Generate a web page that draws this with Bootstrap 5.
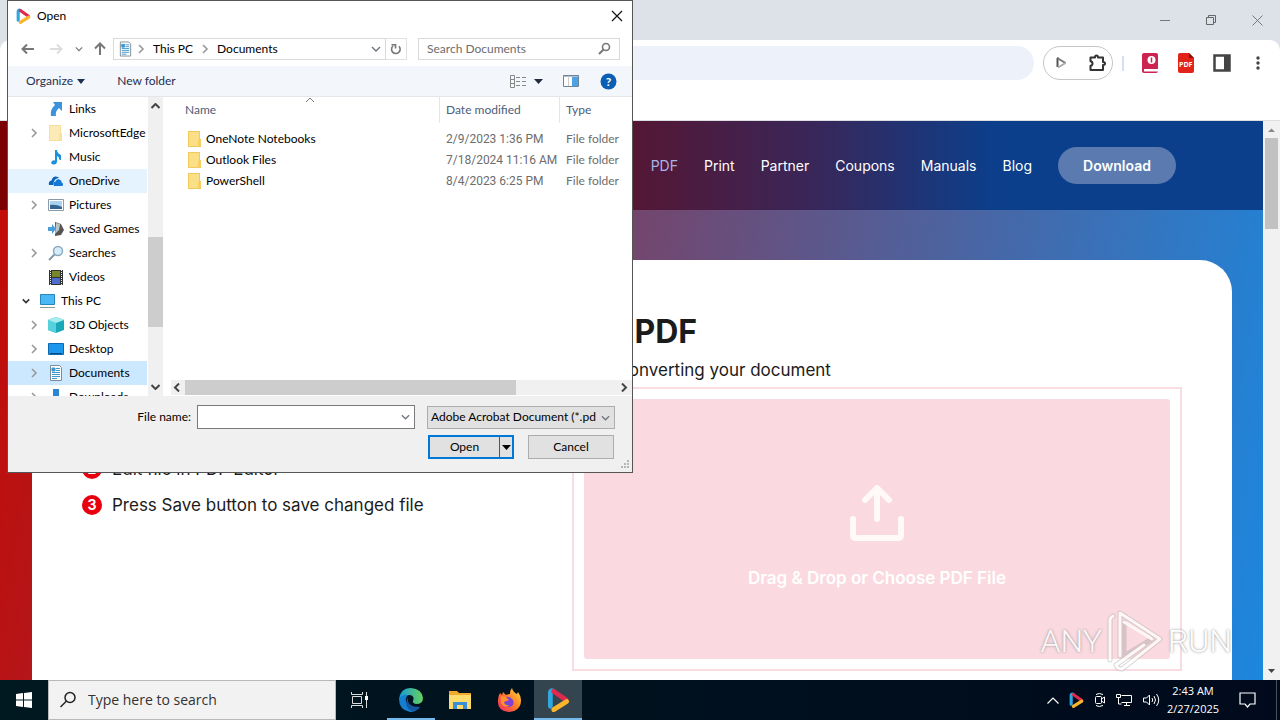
<!DOCTYPE html>
<html lang="en">
<head>
<meta charset="utf-8">
<meta name="viewport" content="width=device-width, initial-scale=1">
<title>Edit PDF</title>
<link rel="stylesheet" href="https://cdn.jsdelivr.net/npm/bootstrap@5.3.0/dist/css/bootstrap.min.css">
<style>
body{font-family:"Open Sans","Noto Sans",sans-serif;font-size:12px;line-height:16px;color:#000;background:#fff}
button,input,select{font:inherit;color:inherit}
svg{display:block;flex:none}
a{text-decoration:none;color:inherit}
.plain{border:0;background:none;padding:0}
.desk{height:100vh;min-height:600px}

/* browser */
.caption-bar{height:40px;background:#dde1e8}
.caption-bar button{width:46px}
.chrome-bg{background:#dde1e8}
.toolbar{height:81px;background:#fff;border-bottom:1px solid #dcdee2;border-radius:10px 10px 0 0;padding:6px 4px 0 90px}
.omnibox{height:34px;background:#ecf1fa;border:0;border-radius:17px;outline:0}
.ext-pill{width:70px;height:34px;margin:0 9px;border:1px solid #c6c6c8;border-radius:17px}
.sep{width:2px;height:15px;background:#d5def3}
.tool{width:36px;height:34px}
.site{font-family:Inter,"Liberation Sans",sans-serif;color:#1b1b1b;background:linear-gradient(100deg,#c40a05,#1c87de)}
.site-nav{height:89px;padding-right:87px;gap:26px;font-size:14px;color:#fff;background:linear-gradient(90deg,#7b0000 30%,#3a2658 64%,#0b3f8c 79%)}
.site-nav .here{color:#a9b4e6}
.cta{height:37px;width:118px;border-radius:19px;background:#5b7bb0;color:#fff;font-weight:600}
.sheet{margin:50px 31px 0 32px;padding:52px 50px 0;border-radius:32px 32px 0 0;background:#fff}
.sheet h1{font-size:32px;line-height:40px;font-weight:700;margin:0 0 8px}
.sub{font-size:17px;line-height:20px;margin:0 0 7px}
.halves{display:grid;grid-template-columns:490fr 610fr}
.steps{list-style:none;margin:0;padding:28px 0 0;font-size:17px;line-height:20px}
.steps li{height:36px;gap:10px}
.num{width:20px;height:20px;border-radius:50%;background:#e9000f;color:#fff;font-size:14px;font-weight:700}
.zone{border:2px solid #f8dce2;padding:10px;height:284px}
.zone button{background:#fadae0;border-radius:3px;color:#fff;font-size:17px;line-height:20px;font-weight:600;gap:27px;padding-top:14px}
.vscroll{width:17px;background:#f1f1f1}
.vscroll .thumb{width:13px;height:91px;background:#c1c1c1}
.brand-mark{right:48px;bottom:48px;color:#fff;font-family:Roboto,"Liberation Sans",sans-serif;font-weight:300;font-size:32px;line-height:40px;text-shadow:0 0 3px #888,0 0 1px #bbb;opacity:.8;pointer-events:none}

/* dialog */
.dlg{left:7px;top:0;width:626px;height:473px;background:#fff;border:1px solid #555;font-family:Lato,"Open Sans",sans-serif}
.dlg-title{height:30px;padding:0 9px 0 8px;gap:6px}
.addr{height:35px;padding:0 12px 0 9px}
.up{margin:0 7px 0 11px}
.box{height:22px;border:1px solid #d9d9d9}
.search-box{margin-left:11px}
.search-box input{border:0;outline:0;width:179px;padding:0 0 0 8px}
.search-box input::placeholder{color:#6d6d6d;opacity:1}
.cmds{height:31px;background:#f3f6fa;border-bottom:1px solid #e3e7ec;color:#1e3054;padding:0 15px 0 18px}
.panes{height:299px}
.tree{width:139px;list-style:none;margin:0;padding:0}
.tree a{display:flex;align-items:center;height:24px;gap:5px;padding-left:22px;white-space:nowrap;overflow:hidden}
.tree a.top{padding-left:14px}
.tree .tw{width:8px;height:10px;margin-right:5px}
.tree a.top .tw{margin-right:4px}
.hov{background:#e5f3ff}
.sel{background:#cce8ff}
.bar15{width:15px;margin-left:1px;padding:6px 0;background:#f0f0f0}
.bar15 .thumb{height:90px;margin-top:128px;background:#cdcdcd}
.files{table-layout:fixed;width:460px;color:#6d6d6d;border-collapse:separate;border-spacing:0}
.files th{height:26px;font-weight:400;color:#4c607a;padding:0 0 0 6px}
.files th+th{border-left:1px solid #e5e5e5}
.files td{height:21px;padding:0 0 0 7px;white-space:nowrap}
.files th:first-child{padding-left:14px}
.files td:first-child{padding-left:17px}
.files td:nth-child(2){font-family:Roboto,"Open Sans",sans-serif}
.files td span{gap:4px}
.files .sort{left:134px;top:0}
.files tbody:before{content:"";display:block;height:5px}
.hbar{height:15px;margin-bottom:1px;background:#f0f0f0}
.hbar .thumb{width:331px;background:#cdcdcd}
.foot{background:#f0f0f0;height:75px;padding:9px 17px 0 0}
.foot label{width:189px;text-align:right;padding-right:6px}
.fname{width:218px;height:24px;border:1px solid #7a7a7a;background:#fff}
.fname input{border:0;outline:0;width:190px}
.ftype{width:188px;height:23px;border:1px solid #adadad;background:#e1e1e1}
.ftype select{appearance:none;border:0;background:none;width:168px;padding:0 0 0 3px;outline:0}
.ftype svg{right:4px;top:8px}
.acts{gap:14px;padding:2px 1px 0 0}
.w-btn{width:86px;height:24px;border:1px solid #adadad;background:#e1e1e1}
.split{border:2px solid #0078d7;background:#e1e1e1;width:86px;height:24px}
.split .drop{width:13px;border-left:1px solid #555}
.grip{right:2px;bottom:2px}

/* taskbar */
.taskbar{height:40px;background:linear-gradient(90deg,#001820,#000a1c);color:#fff}
.taskbar .tb{width:48px;height:40px}
.find{width:288px;background:#f2f2f2;border:1px solid #b9b9b9;color:#333;padding-left:10px;gap:9px}
.find input{border:0;background:none;outline:0;font-size:14px;width:220px}
.find input::placeholder{color:#333;opacity:1}
.pinned{gap:1px;margin-left:3px}
.run{box-shadow:inset 0 -2px #76b9ed}
.act{background:#35454f}
.tray{gap:10px;padding-right:3px}
.clock{width:60px;text-align:center;font-size:11px;line-height:18px}
.peek{width:4px;margin-left:5px;border-left:1px solid #4a525c}
</style>
</head>
<body>
<svg width="0" height="0" class="position-absolute" aria-hidden="true">
<defs>
<symbol id="r" viewBox="0 0 8 10"><path d="M2 1l4 4-4 4" fill="none" stroke="#999" stroke-width="1.6"/></symbol>
<symbol id="chev" viewBox="0 0 10 6"><path d="M1 1l4 4 4-4" fill="none" stroke="currentColor" stroke-width="1.4"/></symbol>
<symbol id="doc" viewBox="0 0 16 16"><path d="M2.500.5h9l2 2v13h-11z" fill="#fff" stroke="#7b8c98"/><path d="M4 3h3v3H4zM8 3.500h4M8 5.500h4M4 7.500h8M4 9.500h8M4 11.500h8M4 13.500h5" stroke="#3f97cf" fill="#3f97cf"/></symbol>
<symbol id="fold" viewBox="0 0 14 16"><path d="M0 0h12v8h1v8H0z" fill="#f0cb5c"/><path d="M1 1h10v14H1z" fill="#fbdf86"/><path d="M10 9h3v6h-3z" fill="#f5cf62"/></symbol>
<symbol id="play" viewBox="0 0 24 26"><path d="M3.500 19V5q0-3 3-2" fill="none" stroke="#2fa8e0" stroke-width="5" stroke-linecap="round"/><path d="M7 3.500l13 9" fill="none" stroke="#e0294d" stroke-width="5" stroke-linecap="round"/><path d="M20.500 14L7 22.500" fill="none" stroke="#fbb52c" stroke-width="5" stroke-linecap="round"/></symbol>
</defs>
</svg>
<div class="desk d-flex flex-column position-relative overflow-hidden">
<main class="flex-grow-1 d-flex flex-column overflow-hidden position-relative" style="min-height:0">
  <div class="caption-bar d-flex justify-content-end flex-shrink-0">
    <button class="plain d-flex align-items-center justify-content-center" aria-label="Minimize"><svg width="10" height="10"><path d="M0 5.500h10" stroke="#777"/></svg></button>
    <button class="plain d-flex align-items-center justify-content-center" aria-label="Restore"><svg width="10" height="10" fill="none" stroke="#666"><path d="M.5 2.500h7v7h-7zM2.500 2V.5h7v7H8"/></svg></button>
    <button class="plain d-flex align-items-center justify-content-center" aria-label="Close"><svg width="11" height="11"><path d="M.5.5l10 10M10.500.5l-10 10" stroke="#777"/></svg></button>
  </div>
  <div class="chrome-bg flex-shrink-0">
  <div class="toolbar d-flex align-items-start">
    <input class="omnibox flex-grow-1" aria-label="Address">
    <div class="ext-pill d-flex align-items-center justify-content-between ps-2 pe-1">
      <svg class="ms-1" width="11" height="12" fill="none" stroke-width="2"><path d="M1.500 10V2q0-1 1-.5" stroke="#555"/><path d="M2 1.500L9.500 6" stroke="#777"/><path d="M9.500 6L2 10.500" stroke="#aaa"/></svg>
      <svg width="20" height="20" fill="none" stroke="#333" stroke-width="2"><path d="M2.500 4.500h4.500q0-2 1.500-2t1.500 2h5v4.500q2 0 2 1.500t-2 1.500v5h-12.500v-4.200q2-.3 2-2.300t-2-2.300z" stroke-linejoin="round"/></svg>
    </div>
    <div class="d-flex align-items-center">
      <span class="sep me-1"></span>
      <button class="tool plain d-flex align-items-center justify-content-center ms-1" aria-label="Manual"><svg width="17" height="20"><rect width="16" height="20" rx="2" fill="#cc2350"/><path d="M2 16h14v2.500H2z" fill="#fff"/><circle cx="9.500" cy="7" r="4" fill="#fff"/><path d="M9.500 4.500v5" stroke="#cc2350" stroke-width="1.500"/></svg></button>
      <button class="tool plain d-flex align-items-center justify-content-center" aria-label="PDF"><svg width="17" height="20"><path d="M2 0h9l5 5v13q0 2-2 2H2q-2 0-2-2V2q0-2 2-2z" fill="#e2231a"/><path d="M11 0v5h5z" fill="#8c0d0d"/><text x="1" y="14" font-size="7" font-weight="700" fill="#fff">PDF</text></svg></button>
      <button class="tool plain d-flex align-items-center justify-content-center" aria-label="Side panel"><svg width="18" height="18"><path d="M1.500 1.500h15v15h-15z" fill="#fff" stroke="#444" stroke-width="2.500"/><path d="M11 1h6v16h-6z" fill="#444"/></svg></button>
      <button class="tool plain d-flex align-items-center justify-content-center" aria-label="Menu"><svg width="4" height="16" fill="#444"><circle cx="2" cy="3" r="1.700"/><circle cx="2" cy="8" r="1.700"/><circle cx="2" cy="13" r="1.700"/></svg></button>
    </div>
  </div>
  </div>
  <div class="d-flex flex-grow-1 overflow-hidden">
    <div class="site flex-grow-1 d-flex flex-column">
      <nav class="site-nav d-flex align-items-center justify-content-end flex-shrink-0">
        <a href="#" class="here">PDF</a><a href="#">Print</a><a href="#">Partner</a><a href="#">Coupons</a><a href="#">Manuals</a><a href="#">Blog</a>
        <a href="#" class="cta d-flex align-items-center justify-content-center">Download</a>
      </nav>
      <section class="sheet flex-grow-1">
        <h1 class="text-center">Edit PDF</h1>
        <p class="sub text-center">Choose a file and start converting your document</p>
        <div class="halves">
          <ol class="steps">
            <li class="d-flex align-items-center"><span class="num d-flex align-items-center justify-content-center">1</span>Choose file</li>
            <li class="d-flex align-items-center"><span class="num d-flex align-items-center justify-content-center">2</span>Edit file in PDF Editor</li>
            <li class="d-flex align-items-center"><span class="num d-flex align-items-center justify-content-center">3</span>Press Save button to save changed file</li>
          </ol>
          <div class="zone"><button class="plain w-100 h-100 d-flex flex-column align-items-center justify-content-center">
            <svg width="56" height="56" fill="none" stroke="#fff9f9" stroke-width="6" stroke-linecap="round" stroke-linejoin="round"><path d="M28 34V4M16 15L28 3l12 12M4 34v16q0 3 3 3h42q3 0 3-3V34"/></svg>
            Drag &amp; Drop or Choose PDF File</button></div>
        </div>
      </section>
    </div>
    <div class="vscroll d-flex flex-column align-items-center flex-shrink-0">
      <svg width="17" height="17"><path d="M5 11h7L8.500 7.500z" fill="#888"/></svg>
      <div class="thumb"></div>
      <svg class="mt-auto" width="17" height="17"><path d="M5 6h7l-3.500 4z" fill="#444"/></svg>
    </div>
  </div>
</main>

<div class="brand-mark position-absolute d-flex align-items-center">
  <span>ANY</span>
  <svg class="mx-1" width="58" height="62" fill="none" stroke-linejoin="round" stroke-linecap="round"><g stroke="#b3adaf" stroke-width="5" opacity=".6"><path d="M4 50V10q0-2 3-4M14 46V3l40 26-38 30q-5 0-6-4l28-20"/><path d="M18 12v34l28-17"/></g><g stroke="#fff" stroke-width="3"><path d="M4 50V10q0-2 3-4M14 46V3l40 26-38 30q-5 0-6-4l28-20"/><path d="M18 12l28 17"/></g></svg>
  <span>RUN</span>
</div>

<section class="dlg position-absolute d-flex flex-column" role="dialog" aria-label="Open">
  <div class="dlg-title d-flex align-items-center">
    <svg width="15" height="17"><use href="#play"/></svg><span class="flex-grow-1">Open</span>
    <button class="plain" aria-label="Close dialog"><svg width="12" height="12"><path d="M1 1l10 10M11 1L1 11" stroke="#111" stroke-width="1.200"/></svg></button>
  </div>
  <div class="addr d-flex align-items-center">
    <button class="plain ms-1" aria-label="Back"><svg width="13" height="12" fill="none" stroke="#777" stroke-width="2"><path d="M13 6H2M6 1.500L1.500 6 6 10.500"/></svg></button>
    <button class="plain ms-3" aria-label="Forward"><svg width="13" height="12" fill="none" stroke="#ddd" stroke-width="2"><path d="M0 6h11M7 1.500L11.500 6 7 10.500"/></svg></button>
    <button class="plain ms-2 ps-1 text-secondary" aria-label="Recent"><svg width="8" height="6"><use href="#chev"/></svg></button>
    <button class="plain up" aria-label="Up"><svg width="12" height="13" fill="none" stroke="#777" stroke-width="2"><path d="M6 13V2M1 6.500L6 1.500l5 5"/></svg></button>
    <div class="box d-flex align-items-center flex-grow-1 ps-1">
      <svg width="15" height="16"><use href="#doc"/></svg>
      <svg class="ms-1 me-2" width="8" height="10"><use href="#r"/></svg>This PC
      <svg class="mx-2" width="8" height="10"><use href="#r"/></svg>Documents
      <svg class="ms-auto me-1 text-secondary" width="10" height="6"><use href="#chev"/></svg>
    </div>
    <button class="box plain border border-start-0 px-1" aria-label="Refresh"><svg width="12" height="12" fill="none" stroke="#777" stroke-width="1.600"><path d="M3 3a4.300 4.300 0 1 0 6 .3M5.500 5.500V1.800H1.500"/></svg></button>
    <div class="box search-box d-flex align-items-center justify-content-between pe-2">
      <input placeholder="Search Documents" aria-label="Search Documents">
      <svg width="13" height="13" fill="none" stroke="#777" stroke-width="1.600"><circle cx="8" cy="5" r="3.500"/><path d="M5.500 7.500L1 12" stroke-width="2"/></svg>
    </div>
  </div>
  <div class="cmds d-flex align-items-center">
    <button class="plain d-flex align-items-center gap-1">Organize <svg width="8" height="5"><path d="M0 0h8L4 5z" fill="#1e3054"/></svg></button>
    <button class="plain ms-4 ps-2">New folder</button>
    <button class="plain ms-auto" aria-label="Change view"><svg width="16" height="13" fill="none" stroke="#888"><path d="M.5.500h4v12h-4zM.5 4.500h4M.5 8.500h4M6 2.500h4M12 2.500h4M6 6.500h4M12 6.500h4M6 10.500h4M12 10.500h4"/></svg></button>
    <button class="plain ms-2 me-3" aria-label="More views"><svg width="9" height="5"><path d="M0 0h9L4.500 5z" fill="#222c40"/></svg></button>
    <button class="plain ms-1 me-3" aria-label="Preview pane"><svg width="17" height="12"><path d="M.5.500h15v11H.5z" fill="#fff" stroke="#6c8398"/><path d="M.5 1h15" stroke="#6c8398"/><path d="M9 2h6v9H9z" fill="#4ea2e2"/><path d="M5.500 1v10" stroke="#ccc"/></svg></button>
    <button class="plain ms-1" aria-label="Help"><svg width="17" height="17"><circle cx="8.500" cy="8.500" r="8" fill="#0a5fb4"/><text x="8.500" y="13" font-size="12" font-weight="700" text-anchor="middle" fill="#fff">?</text></svg></button>
  </div>
  <div class="panes d-flex overflow-hidden flex-shrink-0">
    <ul class="tree overflow-hidden">
      <li><a href="#"><span class="tw"></span><svg width="16" height="16"><path d="M5 1h9v9l-3-3q-4 3-3 8H3Q2 8 7 4z" fill="#3c93dc"/></svg>Links</a></li>
      <li><a href="#"><svg class="tw"><use href="#r"/></svg><svg width="16" height="16" opacity=".6"><use href="#fold"/></svg>MicrosoftEdge</a></li>
      <li><a href="#"><span class="tw"></span><svg width="16" height="16"><path d="M7 1h2q0 3 4 5v5h-1.500q0-3-2.500-4v5q0 4-4 3.500-3-1-1-3.500 1.500-1 3-.5z" fill="#1e90e0"/></svg>Music</a></li>
      <li><a href="#" class="hov"><span class="tw"></span><svg width="16" height="16"><path d="M1 12q-1-4 2.500-4.500Q5 2 10 4l1 1Q6 5 5 12z" fill="#0a64bc"/><path d="M6 13q-2-4 1.500-4.500Q9 5 12.500 7q1.500 1 1 2.500 2.500 1 1 3.500z" fill="#1478d4"/></svg>OneDrive</a></li>
      <li><a href="#"><svg class="tw"><use href="#r"/></svg><svg width="16" height="16"><path d="M.5 2.500h15v11H.5z" fill="#fff" stroke="#8a9aa8"/><path d="M2 4h12v8H2z" fill="#a9d3f0"/><path d="M2 8q6-1 12 2v2H2z" fill="#34658f"/></svg>Pictures</a></li>
      <li><a href="#"><span class="tw"></span><svg width="16" height="16"><path d="M7 1l6 2 3 6-3 5-6 1z" fill="#555"/><path d="M8 2l4 1-1 6-4 4z" fill="#bcc6c8"/><path d="M0 6h4V3l4 5-4 5v-3H0z" fill="#4a9edc"/></svg>Saved Games</a></li>
      <li><a href="#"><svg class="tw"><use href="#r"/></svg><svg width="16" height="16"><path d="M7 9l-6 6" stroke="#8298ac" stroke-width="2"/><circle cx="10" cy="6" r="4.500" fill="#d6ecfa" stroke="#8aa9c2" stroke-width="1.500"/></svg>Searches</a></li>
      <li><a href="#"><span class="tw"></span><svg width="16" height="16"><path d="M1 1h14v15H1z" fill="#333"/><path d="M4 2h8v6H4z" fill="#77872c"/><path d="M4 9h8v6H4z" fill="#4e6ccc"/><path d="M2.500 1v15M13.500 1v15" stroke="#eee" stroke-dasharray="1 1"/></svg>Videos</a></li>
      <li><a href="#" class="top"><svg class="tw" viewBox="0 0 10 6"><path d="M1 1l4 4 4-4" fill="none" stroke="#333" stroke-width="2"/></svg><svg width="17" height="16"><path d="M1.500 1.500h14v10h-14z" fill="#49b8f5" stroke="#2787bd"/><path d="M1 14.500h15" stroke="#899"/></svg>This PC</a></li>
      <li><a href="#"><svg class="tw"><use href="#r"/></svg><svg width="16" height="16"><path d="M8 0l8 3v10l-8 3-8-3V3z" fill="#19a8b8"/><path d="M0 3l8 3v10l-8-3z" fill="#55d2dc"/><path d="M0 3l8-3 8 3-8 3z" fill="#a5eef0"/></svg>3D Objects</a></li>
      <li><a href="#"><svg class="tw"><use href="#r"/></svg><svg width="16" height="16"><path d="M.5 2.500h15v11H.5z" fill="#1c97ee" stroke="#0e68b2"/><path d="M2 12.500h12" stroke="#084a82"/></svg>Desktop</a></li>
      <li><a href="#" class="sel"><svg class="tw"><use href="#r"/></svg><svg width="16" height="16"><use href="#doc"/></svg>Documents</a></li>
      <li><a href="#"><svg class="tw"><use href="#r"/></svg><svg width="16" height="16"><path d="M5 0h6v7h4l-7 8-7-8h4z" fill="#2a86d2"/></svg>Downloads</a></li>
    </ul>
    <div class="bar15 d-flex flex-column align-items-center">
      <svg width="9" height="6"><path d="M.5 5l4-4 4 4" fill="none" stroke="#444" stroke-width="2"/></svg>
      <div class="thumb w-100"></div>
      <svg class="mt-auto" width="9" height="6"><path d="M.5 1l4 4 4-4" fill="none" stroke="#444" stroke-width="2"/></svg>
    </div>
    <div class="flex-grow-1 d-flex flex-column ps-2">
      <table class="files">
        <colgroup><col style="width:268px"><col style="width:120px"><col></colgroup>
        <thead><tr><th scope="col" class="position-relative">Name<svg class="sort position-absolute" width="10" height="6"><path d="M1 5l4-4 4 4" fill="none" stroke="#777"/></svg></th><th scope="col">Date modified</th><th scope="col">Type</th></tr></thead>
        <tbody>
          <tr><td><span class="d-flex align-items-center text-black"><svg width="14" height="16"><use href="#fold"/></svg>OneNote Notebooks</span></td><td>2/9/2023 1:36 PM</td><td>File folder</td></tr>
          <tr><td><span class="d-flex align-items-center text-black"><svg width="14" height="16"><use href="#fold"/></svg>Outlook Files</span></td><td>7/18/2024 11:16 AM</td><td>File folder</td></tr>
          <tr><td><span class="d-flex align-items-center text-black"><svg width="14" height="16"><use href="#fold"/></svg>PowerShell</span></td><td>8/4/2023 6:25 PM</td><td>File folder</td></tr>
        </tbody>
      </table>
      <div class="hbar d-flex align-items-center mt-auto">
        <svg width="14" height="9"><path d="M8 .5l-4 4 4 4" fill="none" stroke="#444" stroke-width="2"/></svg>
        <div class="thumb h-100"></div>
        <svg class="ms-auto" width="14" height="9"><path d="M4 .5l4 4-4 4" fill="none" stroke="#444" stroke-width="2"/></svg>
      </div>
    </div>
  </div>
  <div class="foot flex-grow-1 position-relative">
    <div class="d-flex align-items-center mb-1">
      <label for="fn">File name:</label>
      <div class="fname d-flex align-items-center justify-content-between pe-1"><input id="fn"><svg width="9" height="6" class="text-secondary"><use href="#chev"/></svg></div>
      <div class="ftype d-flex align-items-center position-relative ms-auto"><select aria-label="File type"><option>Adobe Acrobat Document (*.pdf)</option></select><svg width="9" height="6" class="position-absolute text-secondary"><use href="#chev"/></svg></div>
    </div>
    <div class="acts d-flex justify-content-end">
      <div class="split d-flex"><button class="plain flex-grow-1">Open</button><button class="plain drop d-flex align-items-center justify-content-center" aria-label="Open options"><svg width="9" height="5"><path d="M0 0h9L4.500 5z"/></svg></button></div>
      <button class="w-btn p-0">Cancel</button>
    </div>
    <svg class="grip position-absolute" width="10" height="10" fill="#b5b5b5"><path d="M7 0h2v2H7zM4 3h2v2H4zM7 3h2v2H7zM1 6h2v2H1zM4 6h2v2H4zM7 6h2v2H7z"/></svg>
  </div>
</section>

<footer class="taskbar d-flex flex-shrink-0">
  <button class="tb plain d-flex align-items-center justify-content-center" aria-label="Start"><svg width="16" height="16" fill="#fff"><path d="M0 2l7-1v6.500H0zM8 1l8-1v7.500H8zM0 8.500h7V15l-7-1zM8 8.500h8V16l-8-1z"/></svg></button>
  <div class="find d-flex align-items-center"><svg width="18" height="18" fill="none" stroke="#222" stroke-width="1.500"><circle cx="11" cy="6.500" r="5"/><path d="M7.500 10L1.500 16"/></svg><input placeholder="Type here to search" aria-label="Type here to search"></div>
  <button class="tb plain d-flex align-items-center justify-content-center" aria-label="Task view"><svg width="18" height="16" fill="none" stroke="#ddd"><path d="M.5 0v2.500h11V0M.5 16v-2.500h11V16M1.500 4.500h9v7h-9zM15.500 0v16"/><path d="M14 4h3v4h-3z" fill="#fff" stroke="none"/></svg></button>
  <div class="pinned d-flex">
  <button class="tb plain run d-flex align-items-center justify-content-center" aria-label="Edge"><svg width="24" height="24"><defs><linearGradient id="eg" x2="1"><stop stop-color="#159bd8"/><stop offset="1" stop-color="#67d25c"/></linearGradient></defs><path d="M0 12Q1 0 12 0q11 1 12 10 0 6-7 6-4-1-3-3 2-5-3-6Q4 7 0 12z" fill="url(#eg)"/><path d="M0 11Q3 6 9 7q-4 4-1 9 5 6 13 3-4 5-10 5Q0 22 0 11z" fill="#1580d0"/><path d="M9 9q-2 10 12 10-4 4-8 4-9-4-4-14z" fill="#1458a4"/></svg></button>
  <button class="tb plain d-flex align-items-center justify-content-center" aria-label="File Explorer"><svg width="22" height="20"><path d="M0 1h8l2 2h12v16H0z" fill="#f0a92c"/><path d="M0 5h22v14H0z" fill="#ffda6c"/><path d="M4 19v-7h14v7h-4v-4H8v4z" fill="#3c8fd6"/></svg></button>
  <button class="tb plain d-flex align-items-center justify-content-center" aria-label="Firefox"><svg width="24" height="24"><defs><linearGradient id="ff" x1="1" y1="0" x2="0" y2="1"><stop stop-color="#ffe03c"/><stop offset=".5" stop-color="#ff7a28"/><stop offset="1" stop-color="#f0256c"/></linearGradient></defs><path d="M3 5l2 2 1-3 3 3q2-1 4-1 0-4 2-6 1 4 5 6l1-2q3 4 3 8 0 11-12 12Q0 23 1 12q0-4 2-7z" fill="url(#ff)"/><path d="M8 9q5-1 8 3 2 6-4 7-6-1-5-6l4-1z" fill="#8042d6"/><path d="M4 8l5 1 3 3-5 2q1 4 6 3-6 4-9-2z" fill="#ff922a"/></svg></button>
  <button class="tb plain run act d-flex align-items-center justify-content-center" aria-label="PDF app"><svg width="23" height="25"><use href="#play"/></svg></button>
  </div>
  <div class="tray d-flex align-items-center ms-auto">
    <svg width="12" height="7"><path d="M.5 6.500L6 1l5.500 5.500" fill="none" stroke="#fff" stroke-width="1.200"/></svg>
    <svg width="15" height="17"><use href="#play"/></svg>
    <svg width="12" height="16" fill="none" stroke="#fff"><rect x="1.500" y="4.500" width="6" height="7" rx="1"/><path d="M7.500 7l3-2v6l-3-2M2 2.500q3-2 7 0M2 13.500q3 2 7 0"/></svg>
    <svg width="17" height="14" fill="none" stroke="#fff"><path d="M5.500 2.500h10v7h-10M8 12.500h6M10.500 10v2M.5 1.500h4v3h-4zM2.500 5v6h3"/></svg>
    <svg width="17" height="14" fill="none" stroke="#fff"><path d="M.5 5v4h3l3 3V2l-3 3zM9 5q1.500 2 0 4M11 3q3 4 0 8M13.500 1q4.500 6 0 12"/></svg>
  </div>
  <div class="clock d-flex flex-column justify-content-center"><span>2:43 AM</span><span>2/27/2025</span></div>
  <button class="tb plain d-flex align-items-center justify-content-center" aria-label="Notifications"><svg width="17" height="16" fill="none" stroke="#fff" stroke-width="1.200"><path d="M1 1h15v11h-5l-2.500 3L6 12H1z"/></svg></button>
  <div class="peek"></div>
</footer>
</div>
<script src="https://cdn.jsdelivr.net/npm/bootstrap@5.3.0/dist/js/bootstrap.bundle.min.js"></script>
</body>
</html>
